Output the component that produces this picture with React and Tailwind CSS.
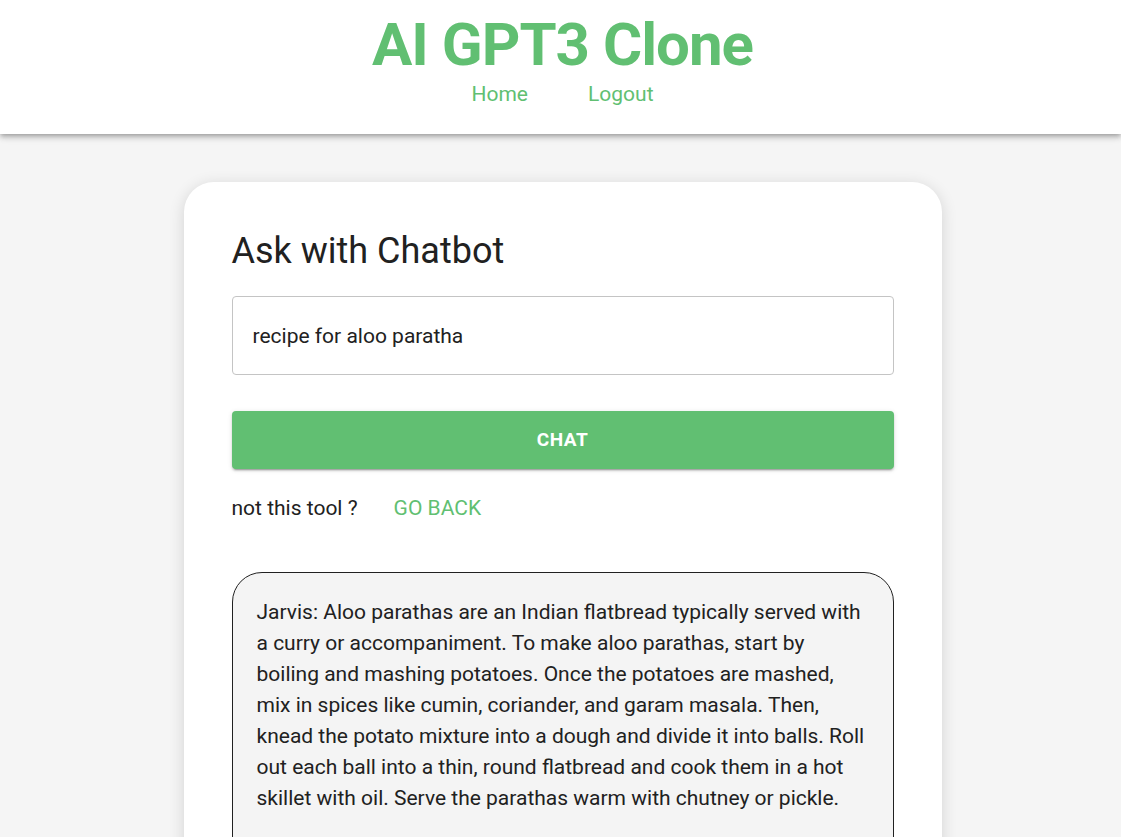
import React, { useState } from "react";

const answer =
  "Jarvis: Aloo parathas are an Indian flatbread typically served with a curry or accompaniment. To make aloo parathas, start by boiling and mashing potatoes. Once the potatoes are mashed, mix in spices like cumin, coriander, and garam masala. Then, knead the potato mixture into a dough and divide it into balls. Roll out each ball into a thin, round flatbread and cook them in a hot skillet with oil. Serve the parathas warm with chutney or pickle.";

const App = () => {
  const [text, setText] = useState("recipe for aloo paratha");

  return (
    <div className="min-h-[837px] bg-[#f5f5f5] font-['Roboto',sans-serif] text-[#212121]">
      {/* header */}
      <header className="h-[134px] bg-white pl-[4px] flex flex-col items-center shadow-[0_2px_4px_-1px_rgba(0,0,0,0.2),0_4px_5px_0_rgba(0,0,0,0.14),0_1px_10px_0_rgba(0,0,0,0.12)] relative z-10">
        <h1 className="pt-[8px] text-[60px] leading-[74px] tracking-[-1px] font-bold text-[#61bf72]">
          AI GPT3 Clone
        </h1>
        <nav className="flex gap-[60px] text-[21px] leading-[24px] text-[#61bf72]">
          <a href="#">Home</a>
          <a href="#">Logout</a>
        </nav>
      </header>

      {/* main card */}
      <main className="pt-[48px] pl-[4px]">
        <div className="mx-auto w-[758px] bg-white rounded-[30px] px-[48px] pt-[50px] pb-[48px] shadow-[0_3px_16px_rgba(0,0,0,0.14)]">
          <h2 className="text-[36px] leading-[39px] font-normal">Ask with Chatbot</h2>

          <input
            value={text}
            onChange={(e) => setText(e.target.value)}
            className="mt-[25px] w-full h-[79px] border border-[#c4c4c4] rounded-[4px] px-[20px] text-[21px] text-[#212121] outline-none"
          />

          <button className="mt-[36px] w-full h-[58px] rounded-[4px] bg-[#61bf72] text-white text-[19px] font-bold tracking-[0.5px] uppercase shadow-[0_3px_1px_-2px_rgba(0,0,0,0.2),0_2px_2px_0_rgba(0,0,0,0.14),0_1px_5px_0_rgba(0,0,0,0.12)]">
            Chat
          </button>

          <div className="mt-[27px] flex items-center gap-[36px] text-[21px] leading-[24px]">
            <span>not this tool ?</span>
            <a href="#" className="text-[#61bf72] uppercase">
              Go back
            </a>
          </div>

          <div className="mt-[52px] border border-[#212121] rounded-[30px] bg-[#f4f4f4] px-[24px] pt-[24px] pb-[60px]">
            <p className="text-[21px] leading-[31px]">{answer}</p>
          </div>
        </div>
      </main>
    </div>
  );
};

export default App;
